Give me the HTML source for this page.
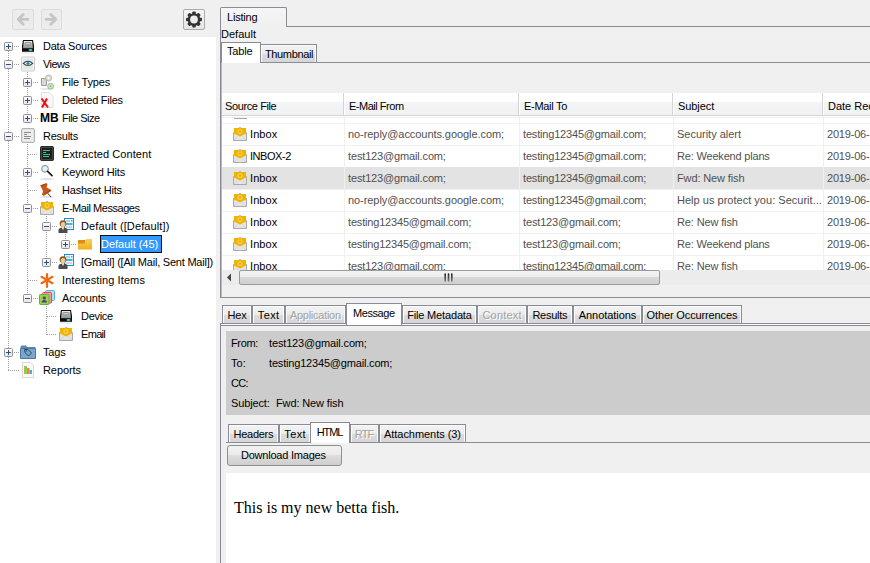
<!DOCTYPE html>
<html><head><meta charset="utf-8"><style>
html,body{margin:0;padding:0;width:870px;height:563px;overflow:hidden;background:#f0f0f0;position:relative}
.t{position:absolute;font-family:"Liberation Sans", sans-serif;font-size:11px;line-height:13px;white-space:nowrap}
svg{overflow:visible}
</style></head><body>
<div style="position:absolute;left:12px;top:9px;width:22px;height:21px;box-sizing:border-box;border:1px solid #dcdcdc;border-radius:2px;background:#ececec;"></div><div style="position:absolute;left:41px;top:9px;width:21px;height:21px;box-sizing:border-box;border:1px solid #dcdcdc;border-radius:2px;background:#ececec;"></div><svg style="position:absolute;left:12px;top:9px" width="22" height="21" viewBox="0 0 22 21"><path d="M16 10.3H6.5M11.2 5.5L6.2 10.3L11.2 15.2" stroke="#c6c6c6" stroke-width="2.8" fill="none" stroke-linecap="round" stroke-linejoin="round"/></svg><svg style="position:absolute;left:41px;top:9px" width="21" height="21" viewBox="0 0 21 21"><path d="M5 10.3H14.5M9.8 5.5L14.8 10.3L9.8 15.2" stroke="#c6c6c6" stroke-width="2.8" fill="none" stroke-linecap="round" stroke-linejoin="round"/></svg><div style="position:absolute;left:183px;top:9px;width:22px;height:21px;box-sizing:border-box;border:1px solid #ababab;border-radius:2px;background:linear-gradient(#f6f6f6,#e4e4e4);"></div><svg style="position:absolute;left:183px;top:9px" width="22" height="21" viewBox="0 0 22 21"><rect x="9.2" y="2.5" width="3.6" height="3.5" rx="1" fill="#333" transform="rotate(0 11 10.5)"/><rect x="9.2" y="2.5" width="3.6" height="3.5" rx="1" fill="#333" transform="rotate(45 11 10.5)"/><rect x="9.2" y="2.5" width="3.6" height="3.5" rx="1" fill="#333" transform="rotate(90 11 10.5)"/><rect x="9.2" y="2.5" width="3.6" height="3.5" rx="1" fill="#333" transform="rotate(135 11 10.5)"/><rect x="9.2" y="2.5" width="3.6" height="3.5" rx="1" fill="#333" transform="rotate(180 11 10.5)"/><rect x="9.2" y="2.5" width="3.6" height="3.5" rx="1" fill="#333" transform="rotate(225 11 10.5)"/><rect x="9.2" y="2.5" width="3.6" height="3.5" rx="1" fill="#333" transform="rotate(270 11 10.5)"/><rect x="9.2" y="2.5" width="3.6" height="3.5" rx="1" fill="#333" transform="rotate(315 11 10.5)"/><circle cx="11" cy="10.5" r="6.3" fill="#333"/><circle cx="11" cy="10.5" r="3.9" fill="#ececec"/></svg><div style="position:absolute;left:0px;top:37px;width:216px;height:526px;background:#fff;"></div><svg width="0" height="0" style="position:absolute"><defs><linearGradient id="expg" x1="0" y1="0" x2="0" y2="1"><stop offset="0" stop-color="#fdfdfd"/><stop offset="1" stop-color="#e4e4e4"/></linearGradient></defs></svg><div style="position:absolute;left:0;top:0;width:216px;height:563px;overflow:hidden"><svg style="position:absolute;left:8px;top:51px" width="1" height="320" viewBox="0 0 1 320"><rect x="0" y="0" width="1" height="1" fill="#a0a0a0"/><rect x="0" y="2" width="1" height="1" fill="#a0a0a0"/><rect x="0" y="4" width="1" height="1" fill="#a0a0a0"/><rect x="0" y="6" width="1" height="1" fill="#a0a0a0"/><rect x="0" y="8" width="1" height="1" fill="#a0a0a0"/><rect x="0" y="10" width="1" height="1" fill="#a0a0a0"/><rect x="0" y="12" width="1" height="1" fill="#a0a0a0"/><rect x="0" y="14" width="1" height="1" fill="#a0a0a0"/><rect x="0" y="16" width="1" height="1" fill="#a0a0a0"/><rect x="0" y="18" width="1" height="1" fill="#a0a0a0"/><rect x="0" y="20" width="1" height="1" fill="#a0a0a0"/><rect x="0" y="22" width="1" height="1" fill="#a0a0a0"/><rect x="0" y="24" width="1" height="1" fill="#a0a0a0"/><rect x="0" y="26" width="1" height="1" fill="#a0a0a0"/><rect x="0" y="28" width="1" height="1" fill="#a0a0a0"/><rect x="0" y="30" width="1" height="1" fill="#a0a0a0"/><rect x="0" y="32" width="1" height="1" fill="#a0a0a0"/><rect x="0" y="34" width="1" height="1" fill="#a0a0a0"/><rect x="0" y="36" width="1" height="1" fill="#a0a0a0"/><rect x="0" y="38" width="1" height="1" fill="#a0a0a0"/><rect x="0" y="40" width="1" height="1" fill="#a0a0a0"/><rect x="0" y="42" width="1" height="1" fill="#a0a0a0"/><rect x="0" y="44" width="1" height="1" fill="#a0a0a0"/><rect x="0" y="46" width="1" height="1" fill="#a0a0a0"/><rect x="0" y="48" width="1" height="1" fill="#a0a0a0"/><rect x="0" y="50" width="1" height="1" fill="#a0a0a0"/><rect x="0" y="52" width="1" height="1" fill="#a0a0a0"/><rect x="0" y="54" width="1" height="1" fill="#a0a0a0"/><rect x="0" y="56" width="1" height="1" fill="#a0a0a0"/><rect x="0" y="58" width="1" height="1" fill="#a0a0a0"/><rect x="0" y="60" width="1" height="1" fill="#a0a0a0"/><rect x="0" y="62" width="1" height="1" fill="#a0a0a0"/><rect x="0" y="64" width="1" height="1" fill="#a0a0a0"/><rect x="0" y="66" width="1" height="1" fill="#a0a0a0"/><rect x="0" y="68" width="1" height="1" fill="#a0a0a0"/><rect x="0" y="70" width="1" height="1" fill="#a0a0a0"/><rect x="0" y="72" width="1" height="1" fill="#a0a0a0"/><rect x="0" y="74" width="1" height="1" fill="#a0a0a0"/><rect x="0" y="76" width="1" height="1" fill="#a0a0a0"/><rect x="0" y="78" width="1" height="1" fill="#a0a0a0"/><rect x="0" y="80" width="1" height="1" fill="#a0a0a0"/><rect x="0" y="82" width="1" height="1" fill="#a0a0a0"/><rect x="0" y="84" width="1" height="1" fill="#a0a0a0"/><rect x="0" y="86" width="1" height="1" fill="#a0a0a0"/><rect x="0" y="88" width="1" height="1" fill="#a0a0a0"/><rect x="0" y="90" width="1" height="1" fill="#a0a0a0"/><rect x="0" y="92" width="1" height="1" fill="#a0a0a0"/><rect x="0" y="94" width="1" height="1" fill="#a0a0a0"/><rect x="0" y="96" width="1" height="1" fill="#a0a0a0"/><rect x="0" y="98" width="1" height="1" fill="#a0a0a0"/><rect x="0" y="100" width="1" height="1" fill="#a0a0a0"/><rect x="0" y="102" width="1" height="1" fill="#a0a0a0"/><rect x="0" y="104" width="1" height="1" fill="#a0a0a0"/><rect x="0" y="106" width="1" height="1" fill="#a0a0a0"/><rect x="0" y="108" width="1" height="1" fill="#a0a0a0"/><rect x="0" y="110" width="1" height="1" fill="#a0a0a0"/><rect x="0" y="112" width="1" height="1" fill="#a0a0a0"/><rect x="0" y="114" width="1" height="1" fill="#a0a0a0"/><rect x="0" y="116" width="1" height="1" fill="#a0a0a0"/><rect x="0" y="118" width="1" height="1" fill="#a0a0a0"/><rect x="0" y="120" width="1" height="1" fill="#a0a0a0"/><rect x="0" y="122" width="1" height="1" fill="#a0a0a0"/><rect x="0" y="124" width="1" height="1" fill="#a0a0a0"/><rect x="0" y="126" width="1" height="1" fill="#a0a0a0"/><rect x="0" y="128" width="1" height="1" fill="#a0a0a0"/><rect x="0" y="130" width="1" height="1" fill="#a0a0a0"/><rect x="0" y="132" width="1" height="1" fill="#a0a0a0"/><rect x="0" y="134" width="1" height="1" fill="#a0a0a0"/><rect x="0" y="136" width="1" height="1" fill="#a0a0a0"/><rect x="0" y="138" width="1" height="1" fill="#a0a0a0"/><rect x="0" y="140" width="1" height="1" fill="#a0a0a0"/><rect x="0" y="142" width="1" height="1" fill="#a0a0a0"/><rect x="0" y="144" width="1" height="1" fill="#a0a0a0"/><rect x="0" y="146" width="1" height="1" fill="#a0a0a0"/><rect x="0" y="148" width="1" height="1" fill="#a0a0a0"/><rect x="0" y="150" width="1" height="1" fill="#a0a0a0"/><rect x="0" y="152" width="1" height="1" fill="#a0a0a0"/><rect x="0" y="154" width="1" height="1" fill="#a0a0a0"/><rect x="0" y="156" width="1" height="1" fill="#a0a0a0"/><rect x="0" y="158" width="1" height="1" fill="#a0a0a0"/><rect x="0" y="160" width="1" height="1" fill="#a0a0a0"/><rect x="0" y="162" width="1" height="1" fill="#a0a0a0"/><rect x="0" y="164" width="1" height="1" fill="#a0a0a0"/><rect x="0" y="166" width="1" height="1" fill="#a0a0a0"/><rect x="0" y="168" width="1" height="1" fill="#a0a0a0"/><rect x="0" y="170" width="1" height="1" fill="#a0a0a0"/><rect x="0" y="172" width="1" height="1" fill="#a0a0a0"/><rect x="0" y="174" width="1" height="1" fill="#a0a0a0"/><rect x="0" y="176" width="1" height="1" fill="#a0a0a0"/><rect x="0" y="178" width="1" height="1" fill="#a0a0a0"/><rect x="0" y="180" width="1" height="1" fill="#a0a0a0"/><rect x="0" y="182" width="1" height="1" fill="#a0a0a0"/><rect x="0" y="184" width="1" height="1" fill="#a0a0a0"/><rect x="0" y="186" width="1" height="1" fill="#a0a0a0"/><rect x="0" y="188" width="1" height="1" fill="#a0a0a0"/><rect x="0" y="190" width="1" height="1" fill="#a0a0a0"/><rect x="0" y="192" width="1" height="1" fill="#a0a0a0"/><rect x="0" y="194" width="1" height="1" fill="#a0a0a0"/><rect x="0" y="196" width="1" height="1" fill="#a0a0a0"/><rect x="0" y="198" width="1" height="1" fill="#a0a0a0"/><rect x="0" y="200" width="1" height="1" fill="#a0a0a0"/><rect x="0" y="202" width="1" height="1" fill="#a0a0a0"/><rect x="0" y="204" width="1" height="1" fill="#a0a0a0"/><rect x="0" y="206" width="1" height="1" fill="#a0a0a0"/><rect x="0" y="208" width="1" height="1" fill="#a0a0a0"/><rect x="0" y="210" width="1" height="1" fill="#a0a0a0"/><rect x="0" y="212" width="1" height="1" fill="#a0a0a0"/><rect x="0" y="214" width="1" height="1" fill="#a0a0a0"/><rect x="0" y="216" width="1" height="1" fill="#a0a0a0"/><rect x="0" y="218" width="1" height="1" fill="#a0a0a0"/><rect x="0" y="220" width="1" height="1" fill="#a0a0a0"/><rect x="0" y="222" width="1" height="1" fill="#a0a0a0"/><rect x="0" y="224" width="1" height="1" fill="#a0a0a0"/><rect x="0" y="226" width="1" height="1" fill="#a0a0a0"/><rect x="0" y="228" width="1" height="1" fill="#a0a0a0"/><rect x="0" y="230" width="1" height="1" fill="#a0a0a0"/><rect x="0" y="232" width="1" height="1" fill="#a0a0a0"/><rect x="0" y="234" width="1" height="1" fill="#a0a0a0"/><rect x="0" y="236" width="1" height="1" fill="#a0a0a0"/><rect x="0" y="238" width="1" height="1" fill="#a0a0a0"/><rect x="0" y="240" width="1" height="1" fill="#a0a0a0"/><rect x="0" y="242" width="1" height="1" fill="#a0a0a0"/><rect x="0" y="244" width="1" height="1" fill="#a0a0a0"/><rect x="0" y="246" width="1" height="1" fill="#a0a0a0"/><rect x="0" y="248" width="1" height="1" fill="#a0a0a0"/><rect x="0" y="250" width="1" height="1" fill="#a0a0a0"/><rect x="0" y="252" width="1" height="1" fill="#a0a0a0"/><rect x="0" y="254" width="1" height="1" fill="#a0a0a0"/><rect x="0" y="256" width="1" height="1" fill="#a0a0a0"/><rect x="0" y="258" width="1" height="1" fill="#a0a0a0"/><rect x="0" y="260" width="1" height="1" fill="#a0a0a0"/><rect x="0" y="262" width="1" height="1" fill="#a0a0a0"/><rect x="0" y="264" width="1" height="1" fill="#a0a0a0"/><rect x="0" y="266" width="1" height="1" fill="#a0a0a0"/><rect x="0" y="268" width="1" height="1" fill="#a0a0a0"/><rect x="0" y="270" width="1" height="1" fill="#a0a0a0"/><rect x="0" y="272" width="1" height="1" fill="#a0a0a0"/><rect x="0" y="274" width="1" height="1" fill="#a0a0a0"/><rect x="0" y="276" width="1" height="1" fill="#a0a0a0"/><rect x="0" y="278" width="1" height="1" fill="#a0a0a0"/><rect x="0" y="280" width="1" height="1" fill="#a0a0a0"/><rect x="0" y="282" width="1" height="1" fill="#a0a0a0"/><rect x="0" y="284" width="1" height="1" fill="#a0a0a0"/><rect x="0" y="286" width="1" height="1" fill="#a0a0a0"/><rect x="0" y="288" width="1" height="1" fill="#a0a0a0"/><rect x="0" y="290" width="1" height="1" fill="#a0a0a0"/><rect x="0" y="292" width="1" height="1" fill="#a0a0a0"/><rect x="0" y="294" width="1" height="1" fill="#a0a0a0"/><rect x="0" y="296" width="1" height="1" fill="#a0a0a0"/><rect x="0" y="298" width="1" height="1" fill="#a0a0a0"/><rect x="0" y="300" width="1" height="1" fill="#a0a0a0"/><rect x="0" y="302" width="1" height="1" fill="#a0a0a0"/><rect x="0" y="304" width="1" height="1" fill="#a0a0a0"/><rect x="0" y="306" width="1" height="1" fill="#a0a0a0"/><rect x="0" y="308" width="1" height="1" fill="#a0a0a0"/><rect x="0" y="310" width="1" height="1" fill="#a0a0a0"/><rect x="0" y="312" width="1" height="1" fill="#a0a0a0"/><rect x="0" y="314" width="1" height="1" fill="#a0a0a0"/><rect x="0" y="316" width="1" height="1" fill="#a0a0a0"/><rect x="0" y="318" width="1" height="1" fill="#a0a0a0"/></svg><svg style="position:absolute;left:27px;top:72px" width="1" height="47" viewBox="0 0 1 47"><rect x="0" y="0" width="1" height="1" fill="#a0a0a0"/><rect x="0" y="2" width="1" height="1" fill="#a0a0a0"/><rect x="0" y="4" width="1" height="1" fill="#a0a0a0"/><rect x="0" y="6" width="1" height="1" fill="#a0a0a0"/><rect x="0" y="8" width="1" height="1" fill="#a0a0a0"/><rect x="0" y="10" width="1" height="1" fill="#a0a0a0"/><rect x="0" y="12" width="1" height="1" fill="#a0a0a0"/><rect x="0" y="14" width="1" height="1" fill="#a0a0a0"/><rect x="0" y="16" width="1" height="1" fill="#a0a0a0"/><rect x="0" y="18" width="1" height="1" fill="#a0a0a0"/><rect x="0" y="20" width="1" height="1" fill="#a0a0a0"/><rect x="0" y="22" width="1" height="1" fill="#a0a0a0"/><rect x="0" y="24" width="1" height="1" fill="#a0a0a0"/><rect x="0" y="26" width="1" height="1" fill="#a0a0a0"/><rect x="0" y="28" width="1" height="1" fill="#a0a0a0"/><rect x="0" y="30" width="1" height="1" fill="#a0a0a0"/><rect x="0" y="32" width="1" height="1" fill="#a0a0a0"/><rect x="0" y="34" width="1" height="1" fill="#a0a0a0"/><rect x="0" y="36" width="1" height="1" fill="#a0a0a0"/><rect x="0" y="38" width="1" height="1" fill="#a0a0a0"/><rect x="0" y="40" width="1" height="1" fill="#a0a0a0"/><rect x="0" y="42" width="1" height="1" fill="#a0a0a0"/><rect x="0" y="44" width="1" height="1" fill="#a0a0a0"/><rect x="0" y="46" width="1" height="1" fill="#a0a0a0"/></svg><svg style="position:absolute;left:27px;top:144px" width="1" height="155" viewBox="0 0 1 155"><rect x="0" y="0" width="1" height="1" fill="#a0a0a0"/><rect x="0" y="2" width="1" height="1" fill="#a0a0a0"/><rect x="0" y="4" width="1" height="1" fill="#a0a0a0"/><rect x="0" y="6" width="1" height="1" fill="#a0a0a0"/><rect x="0" y="8" width="1" height="1" fill="#a0a0a0"/><rect x="0" y="10" width="1" height="1" fill="#a0a0a0"/><rect x="0" y="12" width="1" height="1" fill="#a0a0a0"/><rect x="0" y="14" width="1" height="1" fill="#a0a0a0"/><rect x="0" y="16" width="1" height="1" fill="#a0a0a0"/><rect x="0" y="18" width="1" height="1" fill="#a0a0a0"/><rect x="0" y="20" width="1" height="1" fill="#a0a0a0"/><rect x="0" y="22" width="1" height="1" fill="#a0a0a0"/><rect x="0" y="24" width="1" height="1" fill="#a0a0a0"/><rect x="0" y="26" width="1" height="1" fill="#a0a0a0"/><rect x="0" y="28" width="1" height="1" fill="#a0a0a0"/><rect x="0" y="30" width="1" height="1" fill="#a0a0a0"/><rect x="0" y="32" width="1" height="1" fill="#a0a0a0"/><rect x="0" y="34" width="1" height="1" fill="#a0a0a0"/><rect x="0" y="36" width="1" height="1" fill="#a0a0a0"/><rect x="0" y="38" width="1" height="1" fill="#a0a0a0"/><rect x="0" y="40" width="1" height="1" fill="#a0a0a0"/><rect x="0" y="42" width="1" height="1" fill="#a0a0a0"/><rect x="0" y="44" width="1" height="1" fill="#a0a0a0"/><rect x="0" y="46" width="1" height="1" fill="#a0a0a0"/><rect x="0" y="48" width="1" height="1" fill="#a0a0a0"/><rect x="0" y="50" width="1" height="1" fill="#a0a0a0"/><rect x="0" y="52" width="1" height="1" fill="#a0a0a0"/><rect x="0" y="54" width="1" height="1" fill="#a0a0a0"/><rect x="0" y="56" width="1" height="1" fill="#a0a0a0"/><rect x="0" y="58" width="1" height="1" fill="#a0a0a0"/><rect x="0" y="60" width="1" height="1" fill="#a0a0a0"/><rect x="0" y="62" width="1" height="1" fill="#a0a0a0"/><rect x="0" y="64" width="1" height="1" fill="#a0a0a0"/><rect x="0" y="66" width="1" height="1" fill="#a0a0a0"/><rect x="0" y="68" width="1" height="1" fill="#a0a0a0"/><rect x="0" y="70" width="1" height="1" fill="#a0a0a0"/><rect x="0" y="72" width="1" height="1" fill="#a0a0a0"/><rect x="0" y="74" width="1" height="1" fill="#a0a0a0"/><rect x="0" y="76" width="1" height="1" fill="#a0a0a0"/><rect x="0" y="78" width="1" height="1" fill="#a0a0a0"/><rect x="0" y="80" width="1" height="1" fill="#a0a0a0"/><rect x="0" y="82" width="1" height="1" fill="#a0a0a0"/><rect x="0" y="84" width="1" height="1" fill="#a0a0a0"/><rect x="0" y="86" width="1" height="1" fill="#a0a0a0"/><rect x="0" y="88" width="1" height="1" fill="#a0a0a0"/><rect x="0" y="90" width="1" height="1" fill="#a0a0a0"/><rect x="0" y="92" width="1" height="1" fill="#a0a0a0"/><rect x="0" y="94" width="1" height="1" fill="#a0a0a0"/><rect x="0" y="96" width="1" height="1" fill="#a0a0a0"/><rect x="0" y="98" width="1" height="1" fill="#a0a0a0"/><rect x="0" y="100" width="1" height="1" fill="#a0a0a0"/><rect x="0" y="102" width="1" height="1" fill="#a0a0a0"/><rect x="0" y="104" width="1" height="1" fill="#a0a0a0"/><rect x="0" y="106" width="1" height="1" fill="#a0a0a0"/><rect x="0" y="108" width="1" height="1" fill="#a0a0a0"/><rect x="0" y="110" width="1" height="1" fill="#a0a0a0"/><rect x="0" y="112" width="1" height="1" fill="#a0a0a0"/><rect x="0" y="114" width="1" height="1" fill="#a0a0a0"/><rect x="0" y="116" width="1" height="1" fill="#a0a0a0"/><rect x="0" y="118" width="1" height="1" fill="#a0a0a0"/><rect x="0" y="120" width="1" height="1" fill="#a0a0a0"/><rect x="0" y="122" width="1" height="1" fill="#a0a0a0"/><rect x="0" y="124" width="1" height="1" fill="#a0a0a0"/><rect x="0" y="126" width="1" height="1" fill="#a0a0a0"/><rect x="0" y="128" width="1" height="1" fill="#a0a0a0"/><rect x="0" y="130" width="1" height="1" fill="#a0a0a0"/><rect x="0" y="132" width="1" height="1" fill="#a0a0a0"/><rect x="0" y="134" width="1" height="1" fill="#a0a0a0"/><rect x="0" y="136" width="1" height="1" fill="#a0a0a0"/><rect x="0" y="138" width="1" height="1" fill="#a0a0a0"/><rect x="0" y="140" width="1" height="1" fill="#a0a0a0"/><rect x="0" y="142" width="1" height="1" fill="#a0a0a0"/><rect x="0" y="144" width="1" height="1" fill="#a0a0a0"/><rect x="0" y="146" width="1" height="1" fill="#a0a0a0"/><rect x="0" y="148" width="1" height="1" fill="#a0a0a0"/><rect x="0" y="150" width="1" height="1" fill="#a0a0a0"/><rect x="0" y="152" width="1" height="1" fill="#a0a0a0"/><rect x="0" y="154" width="1" height="1" fill="#a0a0a0"/></svg><svg style="position:absolute;left:46px;top:216px" width="1" height="47" viewBox="0 0 1 47"><rect x="0" y="0" width="1" height="1" fill="#a0a0a0"/><rect x="0" y="2" width="1" height="1" fill="#a0a0a0"/><rect x="0" y="4" width="1" height="1" fill="#a0a0a0"/><rect x="0" y="6" width="1" height="1" fill="#a0a0a0"/><rect x="0" y="8" width="1" height="1" fill="#a0a0a0"/><rect x="0" y="10" width="1" height="1" fill="#a0a0a0"/><rect x="0" y="12" width="1" height="1" fill="#a0a0a0"/><rect x="0" y="14" width="1" height="1" fill="#a0a0a0"/><rect x="0" y="16" width="1" height="1" fill="#a0a0a0"/><rect x="0" y="18" width="1" height="1" fill="#a0a0a0"/><rect x="0" y="20" width="1" height="1" fill="#a0a0a0"/><rect x="0" y="22" width="1" height="1" fill="#a0a0a0"/><rect x="0" y="24" width="1" height="1" fill="#a0a0a0"/><rect x="0" y="26" width="1" height="1" fill="#a0a0a0"/><rect x="0" y="28" width="1" height="1" fill="#a0a0a0"/><rect x="0" y="30" width="1" height="1" fill="#a0a0a0"/><rect x="0" y="32" width="1" height="1" fill="#a0a0a0"/><rect x="0" y="34" width="1" height="1" fill="#a0a0a0"/><rect x="0" y="36" width="1" height="1" fill="#a0a0a0"/><rect x="0" y="38" width="1" height="1" fill="#a0a0a0"/><rect x="0" y="40" width="1" height="1" fill="#a0a0a0"/><rect x="0" y="42" width="1" height="1" fill="#a0a0a0"/><rect x="0" y="44" width="1" height="1" fill="#a0a0a0"/><rect x="0" y="46" width="1" height="1" fill="#a0a0a0"/></svg><svg style="position:absolute;left:65px;top:234px" width="1" height="11" viewBox="0 0 1 11"><rect x="0" y="0" width="1" height="1" fill="#a0a0a0"/><rect x="0" y="2" width="1" height="1" fill="#a0a0a0"/><rect x="0" y="4" width="1" height="1" fill="#a0a0a0"/><rect x="0" y="6" width="1" height="1" fill="#a0a0a0"/><rect x="0" y="8" width="1" height="1" fill="#a0a0a0"/><rect x="0" y="10" width="1" height="1" fill="#a0a0a0"/></svg><svg style="position:absolute;left:46px;top:306px" width="1" height="29" viewBox="0 0 1 29"><rect x="0" y="0" width="1" height="1" fill="#a0a0a0"/><rect x="0" y="2" width="1" height="1" fill="#a0a0a0"/><rect x="0" y="4" width="1" height="1" fill="#a0a0a0"/><rect x="0" y="6" width="1" height="1" fill="#a0a0a0"/><rect x="0" y="8" width="1" height="1" fill="#a0a0a0"/><rect x="0" y="10" width="1" height="1" fill="#a0a0a0"/><rect x="0" y="12" width="1" height="1" fill="#a0a0a0"/><rect x="0" y="14" width="1" height="1" fill="#a0a0a0"/><rect x="0" y="16" width="1" height="1" fill="#a0a0a0"/><rect x="0" y="18" width="1" height="1" fill="#a0a0a0"/><rect x="0" y="20" width="1" height="1" fill="#a0a0a0"/><rect x="0" y="22" width="1" height="1" fill="#a0a0a0"/><rect x="0" y="24" width="1" height="1" fill="#a0a0a0"/><rect x="0" y="26" width="1" height="1" fill="#a0a0a0"/><rect x="0" y="28" width="1" height="1" fill="#a0a0a0"/></svg><svg style="position:absolute;left:4px;top:42px" width="9" height="9" viewBox="0 0 9 9"><rect x="0.5" y="0.5" width="8" height="8" rx="1" fill="url(#expg)" stroke="#919191"/><rect x="2" y="4" width="5" height="1" fill="#2c4d94"/><rect x="4" y="2" width="1" height="5" fill="#2c4d94"/></svg><svg style="position:absolute;left:14px;top:46px" width="6" height="1" viewBox="0 0 6 1"><rect x="0" y="0" width="1" height="1" fill="#a0a0a0"/><rect x="2" y="0" width="1" height="1" fill="#a0a0a0"/><rect x="4" y="0" width="1" height="1" fill="#a0a0a0"/></svg><svg style="position:absolute;left:20px;top:38px" width="16" height="16" viewBox="0 0 16 16"><defs><linearGradient id="dg" x1="0" y1="0" x2="0" y2="1"><stop offset="0" stop-color="#f0f0f0"/><stop offset="1" stop-color="#8c8c8c"/></linearGradient></defs>
<ellipse cx="8" cy="14.8" rx="7" ry="1" fill="#ececec"/>
<path d="M3 2H13L14 8V13.8H2V8Z" fill="#0a0a0a"/>
<path d="M3.9 3H12.1L13 10.2H3Z" fill="url(#dg)"/>
<rect x="5" y="4.5" width="6" height="2.5" rx="0.8" fill="none" stroke="#8a8a8a" stroke-width="0.9"/>
<ellipse cx="10.5" cy="11.9" rx="2" ry="1" fill="#3fd0d0"/></svg><div class="t" style="left:43px;top:40px;color:#000;letter-spacing:-0.246px;">Data Sources</div><svg style="position:absolute;left:4px;top:60px" width="9" height="9" viewBox="0 0 9 9"><rect x="0.5" y="0.5" width="8" height="8" rx="1" fill="url(#expg)" stroke="#919191"/><rect x="2" y="4" width="5" height="1" fill="#2c4d94"/></svg><svg style="position:absolute;left:14px;top:64px" width="6" height="1" viewBox="0 0 6 1"><rect x="0" y="0" width="1" height="1" fill="#a0a0a0"/><rect x="2" y="0" width="1" height="1" fill="#a0a0a0"/><rect x="4" y="0" width="1" height="1" fill="#a0a0a0"/></svg><svg style="position:absolute;left:20px;top:56px" width="16" height="16" viewBox="0 0 16 16"><rect x="1.5" y="1" width="13" height="14" rx="1" fill="#f8f8f8" stroke="#cacaca"/>
<rect x="3" y="2.5" width="10" height="11" fill="#e6e6e6"/>
<path d="M3.3 7.4Q8 3.2 12.7 7.4Q8 11.6 3.3 7.4Z" fill="#f4f4f4" stroke="#3a3a3a" stroke-width="1.1"/>
<circle cx="8" cy="7.3" r="1.6" fill="#1ea6d6"/><circle cx="8" cy="7.3" r="0.5" fill="#0a4a6a"/></svg><div class="t" style="left:43px;top:58px;color:#000;letter-spacing:-0.531px;">Views</div><svg style="position:absolute;left:23px;top:78px" width="9" height="9" viewBox="0 0 9 9"><rect x="0.5" y="0.5" width="8" height="8" rx="1" fill="url(#expg)" stroke="#919191"/><rect x="2" y="4" width="5" height="1" fill="#2c4d94"/><rect x="4" y="2" width="1" height="5" fill="#2c4d94"/></svg><svg style="position:absolute;left:33px;top:82px" width="6" height="1" viewBox="0 0 6 1"><rect x="0" y="0" width="1" height="1" fill="#a0a0a0"/><rect x="2" y="0" width="1" height="1" fill="#a0a0a0"/><rect x="4" y="0" width="1" height="1" fill="#a0a0a0"/></svg><svg style="position:absolute;left:39px;top:74px" width="16" height="16" viewBox="0 0 16 16"><ellipse cx="8" cy="15" rx="7" ry="1" fill="#e6e6e6"/>
<path d="M2.5 4.5H6L7.5 6V11.5H2.5Z" fill="#dadada" stroke="#9c9c9c"/>
<circle cx="9.5" cy="4" r="3" fill="#e6dcc8" stroke="#a8b0b0" stroke-width="0.9"/><circle cx="9.5" cy="4" r="1" fill="#fff"/>
<circle cx="11.6" cy="12.2" r="2.9" fill="#cdecb4" stroke="#9aa" stroke-width="0.9"/><circle cx="11.6" cy="12.2" r="0.8" fill="#6a6"/></svg><div class="t" style="left:62px;top:76px;color:#000;letter-spacing:-0.194px;">File Types</div><svg style="position:absolute;left:23px;top:96px" width="9" height="9" viewBox="0 0 9 9"><rect x="0.5" y="0.5" width="8" height="8" rx="1" fill="url(#expg)" stroke="#919191"/><rect x="2" y="4" width="5" height="1" fill="#2c4d94"/><rect x="4" y="2" width="1" height="5" fill="#2c4d94"/></svg><svg style="position:absolute;left:33px;top:100px" width="6" height="1" viewBox="0 0 6 1"><rect x="0" y="0" width="1" height="1" fill="#a0a0a0"/><rect x="2" y="0" width="1" height="1" fill="#a0a0a0"/><rect x="4" y="0" width="1" height="1" fill="#a0a0a0"/></svg><svg style="position:absolute;left:39px;top:92px" width="16" height="16" viewBox="0 0 16 16"><path d="M2.5 0.5H10.5L14 4V15.5H2.5Z" fill="#f8f8f8" stroke="#e0e0e0"/>
<path d="M2.5 6.5L9 15.5M8 6.5L3 15.5" stroke="#ee1010" stroke-width="2.1"/></svg><div class="t" style="left:62px;top:94px;color:#000;letter-spacing:-0.262px;">Deleted Files</div><svg style="position:absolute;left:23px;top:114px" width="9" height="9" viewBox="0 0 9 9"><rect x="0.5" y="0.5" width="8" height="8" rx="1" fill="url(#expg)" stroke="#919191"/><rect x="2" y="4" width="5" height="1" fill="#2c4d94"/><rect x="4" y="2" width="1" height="5" fill="#2c4d94"/></svg><svg style="position:absolute;left:33px;top:118px" width="6" height="1" viewBox="0 0 6 1"><rect x="0" y="0" width="1" height="1" fill="#a0a0a0"/><rect x="2" y="0" width="1" height="1" fill="#a0a0a0"/><rect x="4" y="0" width="1" height="1" fill="#a0a0a0"/></svg><div class="t" style="left:40px;top:112px;font-weight:bold;font-size:12px;line-height:13px">MB</div><div class="t" style="left:62px;top:112px;color:#000;letter-spacing:-0.510px;">File Size</div><svg style="position:absolute;left:4px;top:132px" width="9" height="9" viewBox="0 0 9 9"><rect x="0.5" y="0.5" width="8" height="8" rx="1" fill="url(#expg)" stroke="#919191"/><rect x="2" y="4" width="5" height="1" fill="#2c4d94"/></svg><svg style="position:absolute;left:14px;top:136px" width="6" height="1" viewBox="0 0 6 1"><rect x="0" y="0" width="1" height="1" fill="#a0a0a0"/><rect x="2" y="0" width="1" height="1" fill="#a0a0a0"/><rect x="4" y="0" width="1" height="1" fill="#a0a0a0"/></svg><svg style="position:absolute;left:20px;top:128px" width="16" height="16" viewBox="0 0 16 16"><rect x="1.5" y="0.5" width="13" height="14" rx="1.5" fill="#e2e2e2" stroke="#b4b4b4"/>
<rect x="3" y="2" width="10" height="11" fill="#ececec"/>
<rect x="4" y="4" width="7" height="1" fill="#8a8a8a"/><rect x="4" y="6" width="3" height="1" fill="#8a8a8a"/>
<rect x="4" y="8" width="7" height="1" fill="#8a8a8a"/><rect x="4" y="10" width="6" height="1" fill="#8a8a8a"/></svg><div class="t" style="left:43px;top:130px;color:#000;letter-spacing:-0.255px;">Results</div><svg style="position:absolute;left:28px;top:154px" width="9" height="1" viewBox="0 0 9 1"><rect x="0" y="0" width="1" height="1" fill="#a0a0a0"/><rect x="2" y="0" width="1" height="1" fill="#a0a0a0"/><rect x="4" y="0" width="1" height="1" fill="#a0a0a0"/><rect x="6" y="0" width="1" height="1" fill="#a0a0a0"/><rect x="8" y="0" width="1" height="1" fill="#a0a0a0"/></svg><svg style="position:absolute;left:39px;top:146px" width="16" height="16" viewBox="0 0 16 16"><rect x="1" y="0" width="14" height="15" rx="1.8" fill="#2a2a2a"/><rect x="2" y="1" width="12" height="13" rx="1" fill="#444"/><rect x="3" y="2" width="10" height="11" fill="#1e1e1e"/>
<rect x="4" y="4" width="7" height="1" fill="#30c890"/><rect x="4" y="6" width="3" height="1" fill="#30c890"/>
<rect x="4" y="8" width="7" height="1" fill="#30c890"/><rect x="4" y="10" width="6" height="1" fill="#30c890"/></svg><div class="t" style="left:62px;top:148px;color:#000;letter-spacing:0.079px;">Extracted Content</div><svg style="position:absolute;left:23px;top:168px" width="9" height="9" viewBox="0 0 9 9"><rect x="0.5" y="0.5" width="8" height="8" rx="1" fill="url(#expg)" stroke="#919191"/><rect x="2" y="4" width="5" height="1" fill="#2c4d94"/><rect x="4" y="2" width="1" height="5" fill="#2c4d94"/></svg><svg style="position:absolute;left:33px;top:172px" width="6" height="1" viewBox="0 0 6 1"><rect x="0" y="0" width="1" height="1" fill="#a0a0a0"/><rect x="2" y="0" width="1" height="1" fill="#a0a0a0"/><rect x="4" y="0" width="1" height="1" fill="#a0a0a0"/></svg><svg style="position:absolute;left:39px;top:164px" width="16" height="16" viewBox="0 0 16 16"><ellipse cx="8" cy="15" rx="7.5" ry="1.2" fill="#e4e4e4"/>
<circle cx="6" cy="4.8" r="3.4" fill="#ddf0f4" stroke="#8a8a8a" stroke-width="1"/>
<path d="M8.6 7.4L13 11.6" stroke="#1a1a1a" stroke-width="1.7" stroke-linecap="round"/></svg><div class="t" style="left:62px;top:166px;color:#000;letter-spacing:-0.141px;">Keyword Hits</div><svg style="position:absolute;left:28px;top:190px" width="9" height="1" viewBox="0 0 9 1"><rect x="0" y="0" width="1" height="1" fill="#a0a0a0"/><rect x="2" y="0" width="1" height="1" fill="#a0a0a0"/><rect x="4" y="0" width="1" height="1" fill="#a0a0a0"/><rect x="6" y="0" width="1" height="1" fill="#a0a0a0"/><rect x="8" y="0" width="1" height="1" fill="#a0a0a0"/></svg><svg style="position:absolute;left:39px;top:182px" width="16" height="16" viewBox="0 0 16 16"><ellipse cx="8" cy="15" rx="7.5" ry="1.2" fill="#e4e4e4"/>
<path d="M8.5 11L12 15" stroke="#333" stroke-width="1"/>
<path d="M1 3.5L7.5 1L8.5 2.5L7.5 5.5L11.5 7.5L12.5 9L4.5 14L3 12.5L4 9L2 5Z" fill="#c4581e"/>
<path d="M2 3.8L7 2M4.5 12.5L11 8.5" stroke="#a84010" stroke-width="1"/></svg><div class="t" style="left:62px;top:184px;color:#000;letter-spacing:-0.205px;">Hashset Hits</div><svg style="position:absolute;left:23px;top:204px" width="9" height="9" viewBox="0 0 9 9"><rect x="0.5" y="0.5" width="8" height="8" rx="1" fill="url(#expg)" stroke="#919191"/><rect x="2" y="4" width="5" height="1" fill="#2c4d94"/></svg><svg style="position:absolute;left:33px;top:208px" width="6" height="1" viewBox="0 0 6 1"><rect x="0" y="0" width="1" height="1" fill="#a0a0a0"/><rect x="2" y="0" width="1" height="1" fill="#a0a0a0"/><rect x="4" y="0" width="1" height="1" fill="#a0a0a0"/></svg><svg style="position:absolute;left:39px;top:200px" width="16" height="16" viewBox="0 0 16 16"><path d="M1.5 6.5H14.5V14.5H1.5Z" fill="#e4e4e4" stroke="#a8a8a8"/>
<rect x="7" y="1" width="2" height="1" fill="#bbb"/>
<path d="M2 2H14V7.5L8 10.5L2 7.5Z" fill="#efb400"/><circle cx="8" cy="5.5" r="2.6" fill="#f4cc50"/><circle cx="8" cy="5.5" r="1.2" fill="#efb400"/>
<path d="M2 14L6 10.5M14 14L10 10.5" stroke="#d6d6d6" fill="none"/></svg><div class="t" style="left:62px;top:202px;color:#000;letter-spacing:-0.457px;">E-Mail Messages</div><svg style="position:absolute;left:42px;top:222px" width="9" height="9" viewBox="0 0 9 9"><rect x="0.5" y="0.5" width="8" height="8" rx="1" fill="url(#expg)" stroke="#919191"/><rect x="2" y="4" width="5" height="1" fill="#2c4d94"/></svg><svg style="position:absolute;left:52px;top:226px" width="6" height="1" viewBox="0 0 6 1"><rect x="0" y="0" width="1" height="1" fill="#a0a0a0"/><rect x="2" y="0" width="1" height="1" fill="#a0a0a0"/><rect x="4" y="0" width="1" height="1" fill="#a0a0a0"/></svg><svg style="position:absolute;left:58px;top:218px" width="16" height="16" viewBox="0 0 16 16"><rect x="6.5" y="0.5" width="9" height="11" fill="#f4f8fc" stroke="#1c8cd4"/>
<rect x="8" y="2.5" width="4" height="1" fill="#999"/><rect x="13" y="2" width="1.5" height="1.5" fill="#2ab0e8"/>
<rect x="8" y="5" width="6.5" height="2" fill="#28c0f0"/><rect x="8" y="8.5" width="6" height="1" fill="#e0a0a0"/>
<path d="M0.5 15V12.3Q0.5 9.5 5 9.5Q9.5 9.5 9.5 12.3V15Z" fill="#4c4c4c"/><path d="M3.8 9.6L5 12L6.2 9.6Z" fill="#fff"/>
<circle cx="5" cy="5.6" r="3.4" fill="#8c5a1e"/><ellipse cx="5.1" cy="6.6" rx="2.3" ry="2.6" fill="#f2c98e"/></svg><div class="t" style="left:81px;top:220px;color:#000;letter-spacing:0.121px;">Default ([Default])</div><svg style="position:absolute;left:61px;top:240px" width="9" height="9" viewBox="0 0 9 9"><rect x="0.5" y="0.5" width="8" height="8" rx="1" fill="url(#expg)" stroke="#919191"/><rect x="2" y="4" width="5" height="1" fill="#2c4d94"/><rect x="4" y="2" width="1" height="5" fill="#2c4d94"/></svg><svg style="position:absolute;left:71px;top:244px" width="6" height="1" viewBox="0 0 6 1"><rect x="0" y="0" width="1" height="1" fill="#a0a0a0"/><rect x="2" y="0" width="1" height="1" fill="#a0a0a0"/><rect x="4" y="0" width="1" height="1" fill="#a0a0a0"/></svg><svg style="position:absolute;left:77px;top:236px" width="16" height="16" viewBox="0 0 16 16"><defs><linearGradient id="fg" x1="0" y1="0" x2="0" y2="1"><stop offset="0" stop-color="#f8d060"/><stop offset="1" stop-color="#eeb015"/></linearGradient></defs>
<path d="M1 4.5Q1 4 1.5 4H8.5V8H1Z" fill="#e08a12"/>
<path d="M1 7.5H7.5L9 3.2Q9.2 3 9.5 3H14.5Q15 3 15 3.5V13Q15 13.5 14.5 13.5H1.5Q1 13.5 1 13Z" fill="url(#fg)"/></svg><div style="position:absolute;left:100px;top:235px;width:62px;height:18px;box-sizing:border-box;background:#3399ff;border:1px solid #111;"></div><div class="t" style="left:101px;top:238px;color:#fff;letter-spacing:-0.024px;">Default (45)</div><svg style="position:absolute;left:42px;top:258px" width="9" height="9" viewBox="0 0 9 9"><rect x="0.5" y="0.5" width="8" height="8" rx="1" fill="url(#expg)" stroke="#919191"/><rect x="2" y="4" width="5" height="1" fill="#2c4d94"/><rect x="4" y="2" width="1" height="5" fill="#2c4d94"/></svg><svg style="position:absolute;left:52px;top:262px" width="6" height="1" viewBox="0 0 6 1"><rect x="0" y="0" width="1" height="1" fill="#a0a0a0"/><rect x="2" y="0" width="1" height="1" fill="#a0a0a0"/><rect x="4" y="0" width="1" height="1" fill="#a0a0a0"/></svg><svg style="position:absolute;left:58px;top:254px" width="16" height="16" viewBox="0 0 16 16"><rect x="6.5" y="0.5" width="9" height="11" fill="#f4f8fc" stroke="#1c8cd4"/>
<rect x="8" y="2.5" width="4" height="1" fill="#999"/><rect x="13" y="2" width="1.5" height="1.5" fill="#2ab0e8"/>
<rect x="8" y="5" width="6.5" height="2" fill="#28c0f0"/><rect x="8" y="8.5" width="6" height="1" fill="#e0a0a0"/>
<path d="M0.5 15V12.3Q0.5 9.5 5 9.5Q9.5 9.5 9.5 12.3V15Z" fill="#4c4c4c"/><path d="M3.8 9.6L5 12L6.2 9.6Z" fill="#fff"/>
<circle cx="5" cy="5.6" r="3.4" fill="#8c5a1e"/><ellipse cx="5.1" cy="6.6" rx="2.3" ry="2.6" fill="#f2c98e"/></svg><div class="t" style="left:81px;top:256px;color:#000;letter-spacing:-0.218px;">[Gmail] ([All Mail, Sent Mail])</div><svg style="position:absolute;left:28px;top:280px" width="9" height="1" viewBox="0 0 9 1"><rect x="0" y="0" width="1" height="1" fill="#a0a0a0"/><rect x="2" y="0" width="1" height="1" fill="#a0a0a0"/><rect x="4" y="0" width="1" height="1" fill="#a0a0a0"/><rect x="6" y="0" width="1" height="1" fill="#a0a0a0"/><rect x="8" y="0" width="1" height="1" fill="#a0a0a0"/></svg><svg style="position:absolute;left:39px;top:272px" width="16" height="16" viewBox="0 0 16 16"><g stroke="#ee6a1a" stroke-width="2.2" stroke-linecap="round"><path d="M8 2V15"/><path d="M2.5 4.8L13.5 11.2"/><path d="M2.5 11.2L13.5 4.8"/></g></svg><div class="t" style="left:62px;top:274px;color:#000;letter-spacing:0.098px;">Interesting Items</div><svg style="position:absolute;left:23px;top:294px" width="9" height="9" viewBox="0 0 9 9"><rect x="0.5" y="0.5" width="8" height="8" rx="1" fill="url(#expg)" stroke="#919191"/><rect x="2" y="4" width="5" height="1" fill="#2c4d94"/></svg><svg style="position:absolute;left:33px;top:298px" width="6" height="1" viewBox="0 0 6 1"><rect x="0" y="0" width="1" height="1" fill="#a0a0a0"/><rect x="2" y="0" width="1" height="1" fill="#a0a0a0"/><rect x="4" y="0" width="1" height="1" fill="#a0a0a0"/></svg><svg style="position:absolute;left:39px;top:290px" width="16" height="16" viewBox="0 0 16 16"><rect x="6.5" y="0.5" width="9" height="10" rx="1" fill="#b4dcf6" stroke="#5aa8e0"/>
<rect x="3.5" y="2.5" width="9" height="10.5" rx="1" fill="#f4a090" stroke="#e84838"/>
<rect x="0.5" y="4.5" width="9.5" height="10" rx="1" fill="#9ad05a" stroke="#6aac32"/>
<rect x="3.8" y="6.5" width="3" height="3" rx="1" fill="#4a4a6a"/><path d="M2.5 12.5Q2.5 10 5.3 10Q8 10 8 12.5Z" fill="#4a4a6a"/></svg><div class="t" style="left:62px;top:292px;color:#000;letter-spacing:-0.169px;">Accounts</div><svg style="position:absolute;left:47px;top:316px" width="9" height="1" viewBox="0 0 9 1"><rect x="0" y="0" width="1" height="1" fill="#a0a0a0"/><rect x="2" y="0" width="1" height="1" fill="#a0a0a0"/><rect x="4" y="0" width="1" height="1" fill="#a0a0a0"/><rect x="6" y="0" width="1" height="1" fill="#a0a0a0"/><rect x="8" y="0" width="1" height="1" fill="#a0a0a0"/></svg><svg style="position:absolute;left:58px;top:308px" width="16" height="16" viewBox="0 0 16 16"><defs><linearGradient id="dg" x1="0" y1="0" x2="0" y2="1"><stop offset="0" stop-color="#f0f0f0"/><stop offset="1" stop-color="#8c8c8c"/></linearGradient></defs>
<ellipse cx="8" cy="14.8" rx="7" ry="1" fill="#ececec"/>
<path d="M3 2H13L14 8V13.8H2V8Z" fill="#0a0a0a"/>
<path d="M3.9 3H12.1L13 10.2H3Z" fill="url(#dg)"/>
<rect x="5" y="4.5" width="6" height="2.5" rx="0.8" fill="none" stroke="#8a8a8a" stroke-width="0.9"/>
<ellipse cx="10.5" cy="11.9" rx="2" ry="1" fill="#3fd0d0"/></svg><div class="t" style="left:81px;top:310px;color:#000;letter-spacing:-0.288px;">Device</div><svg style="position:absolute;left:47px;top:334px" width="9" height="1" viewBox="0 0 9 1"><rect x="0" y="0" width="1" height="1" fill="#a0a0a0"/><rect x="2" y="0" width="1" height="1" fill="#a0a0a0"/><rect x="4" y="0" width="1" height="1" fill="#a0a0a0"/><rect x="6" y="0" width="1" height="1" fill="#a0a0a0"/><rect x="8" y="0" width="1" height="1" fill="#a0a0a0"/></svg><svg style="position:absolute;left:58px;top:326px" width="16" height="16" viewBox="0 0 16 16"><path d="M1.5 6.5H14.5V14.5H1.5Z" fill="#e4e4e4" stroke="#a8a8a8"/>
<rect x="7" y="1" width="2" height="1" fill="#bbb"/>
<path d="M2 2H14V7.5L8 10.5L2 7.5Z" fill="#efb400"/><circle cx="8" cy="5.5" r="2.6" fill="#f4cc50"/><circle cx="8" cy="5.5" r="1.2" fill="#efb400"/>
<path d="M2 14L6 10.5M14 14L10 10.5" stroke="#d6d6d6" fill="none"/></svg><div class="t" style="left:81px;top:328px;color:#000;letter-spacing:-0.683px;">Email</div><svg style="position:absolute;left:4px;top:348px" width="9" height="9" viewBox="0 0 9 9"><rect x="0.5" y="0.5" width="8" height="8" rx="1" fill="url(#expg)" stroke="#919191"/><rect x="2" y="4" width="5" height="1" fill="#2c4d94"/><rect x="4" y="2" width="1" height="5" fill="#2c4d94"/></svg><svg style="position:absolute;left:14px;top:352px" width="6" height="1" viewBox="0 0 6 1"><rect x="0" y="0" width="1" height="1" fill="#a0a0a0"/><rect x="2" y="0" width="1" height="1" fill="#a0a0a0"/><rect x="4" y="0" width="1" height="1" fill="#a0a0a0"/></svg><svg style="position:absolute;left:20px;top:344px" width="16" height="16" viewBox="0 0 16 16"><path d="M0.5 3Q0.5 1.5 2 1.5H6L7 3H14.5Q15.5 3 15.5 4V15H0.5Z" fill="#5a88b0"/><rect x="0.5" y="4.5" width="15" height="10" rx="0.5" fill="#7aa6ca" stroke="#4a76a0"/>
<path d="M4.5 5.5L8 5.5L11.5 9L8.5 12L5 8.5Z" fill="none" stroke="#2a4666" stroke-width="1"/><circle cx="6.3" cy="7" r="0.7" fill="#2a4666"/></svg><div class="t" style="left:43px;top:346px;color:#000;letter-spacing:-0.188px;">Tags</div><svg style="position:absolute;left:8px;top:370px" width="11" height="1" viewBox="0 0 11 1"><rect x="0" y="0" width="1" height="1" fill="#a0a0a0"/><rect x="2" y="0" width="1" height="1" fill="#a0a0a0"/><rect x="4" y="0" width="1" height="1" fill="#a0a0a0"/><rect x="6" y="0" width="1" height="1" fill="#a0a0a0"/><rect x="8" y="0" width="1" height="1" fill="#a0a0a0"/><rect x="10" y="0" width="1" height="1" fill="#a0a0a0"/></svg><svg style="position:absolute;left:20px;top:362px" width="16" height="16" viewBox="0 0 16 16"><path d="M2.5 0.5H10.5L13.5 3.5V15.5H2.5Z" fill="#fafafa" stroke="#d8d8d8"/>
<rect x="4" y="4" width="3" height="8" fill="#98c850"/><rect x="7" y="6" width="2.5" height="6" fill="#f08a30"/><rect x="9.5" y="8" width="2.5" height="4" fill="#40b0e0"/></svg><div class="t" style="left:43px;top:364px;color:#000;letter-spacing:-0.090px;">Reports</div></div><div style="position:absolute;left:220px;top:7px;width:67px;height:20px;box-sizing:border-box;border:1px solid #898c95;border-bottom:none;border-radius:2px 2px 0 0;background:linear-gradient(#f6f6f6,#efefef);"></div><div class="t" style="left:227px;top:11px;color:#000;letter-spacing:-0.200px;">Listing</div><div style="position:absolute;left:287px;top:26px;width:583px;height:1px;background:#898c95;"></div><div style="position:absolute;left:220px;top:26px;width:1px;height:272px;background:#898c95;"></div><div style="position:absolute;left:220px;top:297px;width:650px;height:1px;background:#898c95;"></div><div class="t" style="left:221px;top:28px;color:#000;letter-spacing:0.020px;">Default</div><div style="position:absolute;left:260px;top:44px;width:57px;height:19px;box-sizing:border-box;border:1px solid #898c95;background:linear-gradient(#f3f3f3 0%,#ececec 50%,#dcdcdc 55%,#d6d6d6 100%);box-shadow:inset 1px 1px 0 #fbfbfb, inset -1px 0 0 #fbfbfb;"></div><div class="t" style="left:265px;top:48px;color:#000;letter-spacing:-0.362px;">Thumbnail</div><div style="position:absolute;left:260px;top:62px;width:610px;height:1px;background:#898c95;"></div><div style="position:absolute;left:221px;top:42px;width:40px;height:21px;box-sizing:border-box;border:1px solid #898c95;border-bottom:none;background:#fff;"></div><div class="t" style="left:227px;top:45px;color:#000;letter-spacing:-0.159px;">Table</div><div style="position:absolute;left:221px;top:63px;width:1px;height:234px;background:#b8bac0;"></div><div style="position:absolute;left:222px;top:93px;width:648px;height:22px;background:linear-gradient(#ffffff 0%,#ffffff 40%,#f3f4f6 41%,#f1f2f4 100%);"></div><div style="position:absolute;left:222px;top:115px;width:648px;height:1px;background:#d5d5d5;"></div><div class="t" style="left:225px;top:100px;color:#000;letter-spacing:-0.395px;">Source File</div><div style="position:absolute;left:343px;top:93px;width:1px;height:22px;background:#d5d5d5;"></div><div style="position:absolute;left:344px;top:93px;width:1px;height:22px;background:#ffffff;"></div><div class="t" style="left:349px;top:100px;color:#000;letter-spacing:-0.481px;">E-Mail From</div><div style="position:absolute;left:518px;top:93px;width:1px;height:22px;background:#d5d5d5;"></div><div style="position:absolute;left:519px;top:93px;width:1px;height:22px;background:#ffffff;"></div><div class="t" style="left:524px;top:100px;color:#000;letter-spacing:-0.295px;">E-Mail To</div><div style="position:absolute;left:672px;top:93px;width:1px;height:22px;background:#d5d5d5;"></div><div style="position:absolute;left:673px;top:93px;width:1px;height:22px;background:#ffffff;"></div><div class="t" style="left:678px;top:100px;color:#000;letter-spacing:-0.072px;">Subject</div><div style="position:absolute;left:822px;top:93px;width:1px;height:22px;background:#d5d5d5;"></div><div style="position:absolute;left:823px;top:93px;width:1px;height:22px;background:#ffffff;"></div><div class="t" style="left:828px;top:100px;color:#000;">Date Received</div><div style="position:absolute;left:222px;top:116px;width:648px;height:154px;background:#fff;"></div><div style="position:absolute;left:222px;top:117px;width:648px;height:1px;background:#f0f0f0;"></div><div style="position:absolute;left:222px;top:167px;width:648px;height:22px;background:#e3e3e3;"></div><div style="position:absolute;left:222px;top:123px;width:648px;height:1px;background:#f0f0f0;"></div><div style="position:absolute;left:222px;top:145px;width:648px;height:1px;background:#f0f0f0;"></div><div style="position:absolute;left:222px;top:189px;width:648px;height:1px;background:#f0f0f0;"></div><div style="position:absolute;left:222px;top:211px;width:648px;height:1px;background:#f0f0f0;"></div><div style="position:absolute;left:222px;top:233px;width:648px;height:1px;background:#f0f0f0;"></div><div style="position:absolute;left:222px;top:255px;width:648px;height:1px;background:#f0f0f0;"></div><div style="position:absolute;left:344px;top:116px;width:1px;height:154px;background:#f0f0f0;"></div><div style="position:absolute;left:519px;top:116px;width:1px;height:154px;background:#f0f0f0;"></div><div style="position:absolute;left:673px;top:116px;width:1px;height:154px;background:#f0f0f0;"></div><div style="position:absolute;left:823px;top:116px;width:1px;height:154px;background:#f0f0f0;"></div><div style="position:absolute;left:222px;top:116px;width:648px;height:154px;overflow:hidden"><div style="position:absolute;left:12px;top:2px;width:13px;height:1px;background:#a8a8a8;"></div><svg style="position:absolute;left:11px;top:11px" width="14" height="14" viewBox="0 0 14 14"><path d="M0.5 5.5H13.5V13.5H0.5Z" fill="#e4e4e4" stroke="#a8a8a8"/>
<rect x="6" y="0" width="2" height="1" fill="#bbb"/>
<path d="M1 1H13V6.5L7 9.5L1 6.5Z" fill="#efb400"/><circle cx="7" cy="4.5" r="2.6" fill="#f4cc50"/><circle cx="7" cy="4.5" r="1.2" fill="#efb400"/>
<path d="M1 13L5 9.5M13 13L9 9.5" stroke="#d6d6d6" fill="none"/></svg><div class="t" style="left:28px;top:12px;color:#000;letter-spacing:0.096px;">Inbox</div><div class="t" style="left:126px;top:12px;color:#505050;letter-spacing:-0.063px;">no-reply@accounts.google.com;</div><div class="t" style="left:301px;top:12px;color:#505050;letter-spacing:-0.180px;">testing12345@gmail.com;</div><div class="t" style="left:455px;top:12px;color:#505050;letter-spacing:-0.015px;">Security alert</div><div class="t" style="left:605px;top:12px;color:#505050;letter-spacing:-0.193px;">2019-06-</div><svg style="position:absolute;left:11px;top:33px" width="14" height="14" viewBox="0 0 14 14"><path d="M0.5 5.5H13.5V13.5H0.5Z" fill="#e4e4e4" stroke="#a8a8a8"/>
<rect x="6" y="0" width="2" height="1" fill="#bbb"/>
<path d="M1 1H13V6.5L7 9.5L1 6.5Z" fill="#efb400"/><circle cx="7" cy="4.5" r="2.6" fill="#f4cc50"/><circle cx="7" cy="4.5" r="1.2" fill="#efb400"/>
<path d="M1 13L5 9.5M13 13L9 9.5" stroke="#d6d6d6" fill="none"/></svg><div class="t" style="left:28px;top:34px;color:#000;letter-spacing:-0.445px;">INBOX-2</div><div class="t" style="left:126px;top:34px;color:#505050;letter-spacing:-0.147px;">test123@gmail.com;</div><div class="t" style="left:301px;top:34px;color:#505050;letter-spacing:-0.180px;">testing12345@gmail.com;</div><div class="t" style="left:455px;top:34px;color:#505050;letter-spacing:-0.183px;">Re: Weekend plans</div><div class="t" style="left:605px;top:34px;color:#505050;letter-spacing:-0.193px;">2019-06-</div><svg style="position:absolute;left:11px;top:55px" width="14" height="14" viewBox="0 0 14 14"><path d="M0.5 5.5H13.5V13.5H0.5Z" fill="#e4e4e4" stroke="#a8a8a8"/>
<rect x="6" y="0" width="2" height="1" fill="#bbb"/>
<path d="M1 1H13V6.5L7 9.5L1 6.5Z" fill="#efb400"/><circle cx="7" cy="4.5" r="2.6" fill="#f4cc50"/><circle cx="7" cy="4.5" r="1.2" fill="#efb400"/>
<path d="M1 13L5 9.5M13 13L9 9.5" stroke="#d6d6d6" fill="none"/></svg><div class="t" style="left:28px;top:56px;color:#000;letter-spacing:0.096px;">Inbox</div><div class="t" style="left:126px;top:56px;color:#505050;letter-spacing:-0.147px;">test123@gmail.com;</div><div class="t" style="left:301px;top:56px;color:#505050;letter-spacing:-0.180px;">testing12345@gmail.com;</div><div class="t" style="left:455px;top:56px;color:#505050;letter-spacing:-0.121px;">Fwd: New fish</div><div class="t" style="left:605px;top:56px;color:#505050;letter-spacing:-0.193px;">2019-06-</div><svg style="position:absolute;left:11px;top:77px" width="14" height="14" viewBox="0 0 14 14"><path d="M0.5 5.5H13.5V13.5H0.5Z" fill="#e4e4e4" stroke="#a8a8a8"/>
<rect x="6" y="0" width="2" height="1" fill="#bbb"/>
<path d="M1 1H13V6.5L7 9.5L1 6.5Z" fill="#efb400"/><circle cx="7" cy="4.5" r="2.6" fill="#f4cc50"/><circle cx="7" cy="4.5" r="1.2" fill="#efb400"/>
<path d="M1 13L5 9.5M13 13L9 9.5" stroke="#d6d6d6" fill="none"/></svg><div class="t" style="left:28px;top:78px;color:#000;letter-spacing:0.096px;">Inbox</div><div class="t" style="left:126px;top:78px;color:#505050;letter-spacing:-0.063px;">no-reply@accounts.google.com;</div><div class="t" style="left:301px;top:78px;color:#505050;letter-spacing:-0.180px;">testing12345@gmail.com;</div><div class="t" style="left:455px;top:78px;color:#505050;letter-spacing:0.019px;">Help us protect you: Securit...</div><div class="t" style="left:605px;top:78px;color:#505050;letter-spacing:-0.193px;">2019-06-</div><svg style="position:absolute;left:11px;top:99px" width="14" height="14" viewBox="0 0 14 14"><path d="M0.5 5.5H13.5V13.5H0.5Z" fill="#e4e4e4" stroke="#a8a8a8"/>
<rect x="6" y="0" width="2" height="1" fill="#bbb"/>
<path d="M1 1H13V6.5L7 9.5L1 6.5Z" fill="#efb400"/><circle cx="7" cy="4.5" r="2.6" fill="#f4cc50"/><circle cx="7" cy="4.5" r="1.2" fill="#efb400"/>
<path d="M1 13L5 9.5M13 13L9 9.5" stroke="#d6d6d6" fill="none"/></svg><div class="t" style="left:28px;top:100px;color:#000;letter-spacing:0.096px;">Inbox</div><div class="t" style="left:126px;top:100px;color:#505050;letter-spacing:-0.180px;">testing12345@gmail.com;</div><div class="t" style="left:301px;top:100px;color:#505050;letter-spacing:-0.147px;">test123@gmail.com;</div><div class="t" style="left:455px;top:100px;color:#505050;letter-spacing:-0.130px;">Re: New fish</div><div class="t" style="left:605px;top:100px;color:#505050;letter-spacing:-0.193px;">2019-06-</div><svg style="position:absolute;left:11px;top:121px" width="14" height="14" viewBox="0 0 14 14"><path d="M0.5 5.5H13.5V13.5H0.5Z" fill="#e4e4e4" stroke="#a8a8a8"/>
<rect x="6" y="0" width="2" height="1" fill="#bbb"/>
<path d="M1 1H13V6.5L7 9.5L1 6.5Z" fill="#efb400"/><circle cx="7" cy="4.5" r="2.6" fill="#f4cc50"/><circle cx="7" cy="4.5" r="1.2" fill="#efb400"/>
<path d="M1 13L5 9.5M13 13L9 9.5" stroke="#d6d6d6" fill="none"/></svg><div class="t" style="left:28px;top:122px;color:#000;letter-spacing:0.096px;">Inbox</div><div class="t" style="left:126px;top:122px;color:#505050;letter-spacing:-0.180px;">testing12345@gmail.com;</div><div class="t" style="left:301px;top:122px;color:#505050;letter-spacing:-0.147px;">test123@gmail.com;</div><div class="t" style="left:455px;top:122px;color:#505050;letter-spacing:-0.183px;">Re: Weekend plans</div><div class="t" style="left:605px;top:122px;color:#505050;letter-spacing:-0.193px;">2019-06-</div><svg style="position:absolute;left:11px;top:143px" width="14" height="14" viewBox="0 0 14 14"><path d="M0.5 5.5H13.5V13.5H0.5Z" fill="#e4e4e4" stroke="#a8a8a8"/>
<rect x="6" y="0" width="2" height="1" fill="#bbb"/>
<path d="M1 1H13V6.5L7 9.5L1 6.5Z" fill="#efb400"/><circle cx="7" cy="4.5" r="2.6" fill="#f4cc50"/><circle cx="7" cy="4.5" r="1.2" fill="#efb400"/>
<path d="M1 13L5 9.5M13 13L9 9.5" stroke="#d6d6d6" fill="none"/></svg><div class="t" style="left:28px;top:144px;color:#000;letter-spacing:0.096px;">Inbox</div><div class="t" style="left:126px;top:144px;color:#505050;letter-spacing:-0.147px;">test123@gmail.com;</div><div class="t" style="left:301px;top:144px;color:#505050;letter-spacing:-0.180px;">testing12345@gmail.com;</div><div class="t" style="left:455px;top:144px;color:#505050;letter-spacing:-0.130px;">Re: New fish</div><div class="t" style="left:605px;top:144px;color:#505050;letter-spacing:-0.193px;">2019-06-</div></div><div style="position:absolute;left:222px;top:270px;width:648px;height:15px;background:#ececec;"></div><svg style="position:absolute;left:226px;top:273px" width="6" height="9" viewBox="0 0 6 9"><path d="M5 0.5V8.5L1 4.5Z" fill="#444"/></svg><div style="position:absolute;left:239px;top:270px;width:421px;height:15px;box-sizing:border-box;border:1px solid #9a9a9a;border-radius:2px;background:linear-gradient(#f4f4f4 0%,#ececec 45%,#d8d8d8 50%,#d0d0d0 100%);"></div><svg style="position:absolute;left:444px;top:273px" width="10" height="9" viewBox="0 0 10 9"><defs><linearGradient id="grp" x1="0" y1="0" x2="0" y2="1"><stop offset="0" stop-color="#222"/><stop offset="1" stop-color="#777"/></linearGradient></defs><path d="M1.2 1V8M4.5 1V8M7.8 1V8" stroke="url(#grp)" stroke-width="1.6" stroke-linecap="round"/></svg><div style="position:absolute;left:220px;top:323px;width:1px;height:240px;background:#898c95;"></div><div style="position:absolute;left:220px;top:323px;width:650px;height:1px;background:#898c95;"></div><div style="position:absolute;left:221px;top:324px;width:649px;height:1px;background:#fafafa;"></div><div style="position:absolute;left:221px;top:325px;width:649px;height:1px;background:#898c95;"></div><div style="position:absolute;left:222px;top:305px;width:30px;height:19px;box-sizing:border-box;border:1px solid #898c95;background:linear-gradient(#f3f3f3 0%,#ececec 50%,#dcdcdc 55%,#d6d6d6 100%);box-shadow:inset 1px 1px 0 #fbfbfb, inset -1px 0 0 #fbfbfb;"></div><div class="t" style="left:222px;width:30px;text-align:center;top:309px;color:#000;letter-spacing:-0.154px;text-indent:-0.154px">Hex</div><div style="position:absolute;left:252px;top:305px;width:33px;height:19px;box-sizing:border-box;border:1px solid #898c95;background:linear-gradient(#f3f3f3 0%,#ececec 50%,#dcdcdc 55%,#d6d6d6 100%);box-shadow:inset 1px 1px 0 #fbfbfb, inset -1px 0 0 #fbfbfb;"></div><div class="t" style="left:252px;width:33px;text-align:center;top:309px;color:#000;letter-spacing:0.403px;text-indent:0.403px">Text</div><div style="position:absolute;left:285px;top:305px;width:61px;height:19px;box-sizing:border-box;border:1px solid #898c95;background:linear-gradient(#f3f3f3 0%,#ececec 50%,#dcdcdc 55%,#d6d6d6 100%);box-shadow:inset 1px 1px 0 #fbfbfb, inset -1px 0 0 #fbfbfb;"></div><div class="t" style="left:285px;width:61px;text-align:center;top:309px;color:#a3a3a3;text-shadow:1px 1px 0 #fff;letter-spacing:-0.266px;text-indent:-0.266px">Application</div><div style="position:absolute;left:402px;top:305px;width:75px;height:19px;box-sizing:border-box;border:1px solid #898c95;background:linear-gradient(#f3f3f3 0%,#ececec 50%,#dcdcdc 55%,#d6d6d6 100%);box-shadow:inset 1px 1px 0 #fbfbfb, inset -1px 0 0 #fbfbfb;"></div><div class="t" style="left:402px;width:75px;text-align:center;top:309px;color:#000;letter-spacing:-0.158px;text-indent:-0.158px">File Metadata</div><div style="position:absolute;left:477px;top:305px;width:50px;height:19px;box-sizing:border-box;border:1px solid #898c95;background:linear-gradient(#f3f3f3 0%,#ececec 50%,#dcdcdc 55%,#d6d6d6 100%);box-shadow:inset 1px 1px 0 #fbfbfb, inset -1px 0 0 #fbfbfb;"></div><div class="t" style="left:477px;width:50px;text-align:center;top:309px;color:#a3a3a3;text-shadow:1px 1px 0 #fff;letter-spacing:0.211px;text-indent:0.211px">Context</div><div style="position:absolute;left:527px;top:305px;width:46px;height:19px;box-sizing:border-box;border:1px solid #898c95;background:linear-gradient(#f3f3f3 0%,#ececec 50%,#dcdcdc 55%,#d6d6d6 100%);box-shadow:inset 1px 1px 0 #fbfbfb, inset -1px 0 0 #fbfbfb;"></div><div class="t" style="left:527px;width:46px;text-align:center;top:309px;color:#000;letter-spacing:-0.255px;text-indent:-0.255px">Results</div><div style="position:absolute;left:573px;top:305px;width:69px;height:19px;box-sizing:border-box;border:1px solid #898c95;background:linear-gradient(#f3f3f3 0%,#ececec 50%,#dcdcdc 55%,#d6d6d6 100%);box-shadow:inset 1px 1px 0 #fbfbfb, inset -1px 0 0 #fbfbfb;"></div><div class="t" style="left:573px;width:69px;text-align:center;top:309px;color:#000;letter-spacing:-0.055px;text-indent:-0.055px">Annotations</div><div style="position:absolute;left:642px;top:305px;width:100px;height:19px;box-sizing:border-box;border:1px solid #898c95;background:linear-gradient(#f3f3f3 0%,#ececec 50%,#dcdcdc 55%,#d6d6d6 100%);box-shadow:inset 1px 1px 0 #fbfbfb, inset -1px 0 0 #fbfbfb;"></div><div class="t" style="left:642px;width:100px;text-align:center;top:309px;color:#000;letter-spacing:-0.131px;text-indent:-0.131px">Other Occurrences</div><div style="position:absolute;left:346px;top:303px;width:56px;height:22px;box-sizing:border-box;border:1px solid #898c95;border-bottom:none;background:#fff;"></div><div class="t" style="left:346px;width:56px;text-align:center;top:307px;color:#000;letter-spacing:-0.406px;text-indent:-0.406px">Message</div><div style="position:absolute;left:221px;top:325px;width:649px;height:1px;background:#898c95;"></div><div style="position:absolute;left:226px;top:331px;width:644px;height:84px;background:#cccccc;"></div><div class="t" style="left:231px;top:337px;color:#000;letter-spacing:-0.367px;">From:</div><div class="t" style="left:269px;top:337px;color:#000;letter-spacing:-0.147px;">test123@gmail.com;</div><div class="t" style="left:231px;top:357px;color:#000;letter-spacing:0.071px;">To:</div><div class="t" style="left:269px;top:357px;color:#000;letter-spacing:-0.180px;">testing12345@gmail.com;</div><div class="t" style="left:231px;top:377px;color:#000;letter-spacing:-0.651px;">CC:</div><div class="t" style="left:231px;top:397px;color:#000;letter-spacing:-0.131px;">Subject:</div><div class="t" style="left:276px;top:397px;color:#000;letter-spacing:-0.121px;">Fwd: New fish</div><div style="position:absolute;left:226px;top:442px;width:644px;height:1px;background:#898c95;"></div><div style="position:absolute;left:228px;top:424px;width:51px;height:19px;box-sizing:border-box;border:1px solid #898c95;background:linear-gradient(#f3f3f3 0%,#ececec 50%,#dcdcdc 55%,#d6d6d6 100%);box-shadow:inset 1px 1px 0 #fbfbfb, inset -1px 0 0 #fbfbfb;"></div><div class="t" style="left:228px;width:51px;text-align:center;top:428px;color:#000;letter-spacing:-0.254px;text-indent:-0.254px">Headers</div><div style="position:absolute;left:279px;top:424px;width:32px;height:19px;box-sizing:border-box;border:1px solid #898c95;background:linear-gradient(#f3f3f3 0%,#ececec 50%,#dcdcdc 55%,#d6d6d6 100%);box-shadow:inset 1px 1px 0 #fbfbfb, inset -1px 0 0 #fbfbfb;"></div><div class="t" style="left:279px;width:32px;text-align:center;top:428px;color:#000;letter-spacing:0.403px;text-indent:0.403px">Text</div><div style="position:absolute;left:350px;top:424px;width:29px;height:19px;box-sizing:border-box;border:1px solid #898c95;background:linear-gradient(#f3f3f3 0%,#ececec 50%,#dcdcdc 55%,#d6d6d6 100%);box-shadow:inset 1px 1px 0 #fbfbfb, inset -1px 0 0 #fbfbfb;"></div><div class="t" style="left:350px;width:29px;text-align:center;top:428px;color:#a3a3a3;text-shadow:1px 1px 0 #fff;letter-spacing:-0.896px;text-indent:-0.896px">RTF</div><div style="position:absolute;left:379px;top:424px;width:87px;height:19px;box-sizing:border-box;border:1px solid #898c95;background:linear-gradient(#f3f3f3 0%,#ececec 50%,#dcdcdc 55%,#d6d6d6 100%);box-shadow:inset 1px 1px 0 #fbfbfb, inset -1px 0 0 #fbfbfb;"></div><div class="t" style="left:379px;width:87px;text-align:center;top:428px;color:#000;letter-spacing:-0.043px;text-indent:-0.043px">Attachments (3)</div><div style="position:absolute;left:310px;top:422px;width:40px;height:21px;box-sizing:border-box;border:1px solid #898c95;border-bottom:none;background:#fff;"></div><div class="t" style="left:310px;width:40px;text-align:center;top:426px;color:#000;letter-spacing:-1.088px;text-indent:-1.088px">HTML</div><div style="position:absolute;left:227px;top:445px;width:115px;height:21px;box-sizing:border-box;border:1px solid #8e8f8f;border-radius:3px;background:linear-gradient(#f2f2f2 0%,#ebebeb 45%,#dddddd 50%,#cfcfcf 100%);"></div><div class="t" style="left:241px;top:449px;color:#000;letter-spacing:-0.224px;">Download Images</div><div style="position:absolute;left:226px;top:473px;width:644px;height:90px;background:#fff;"></div><div style="position:absolute;left:234px;top:498px;font-family:'Liberation Serif',serif;font-size:16px;line-height:20px;color:#000;white-space:nowrap">This is my new betta fish.</div>
</body></html>
